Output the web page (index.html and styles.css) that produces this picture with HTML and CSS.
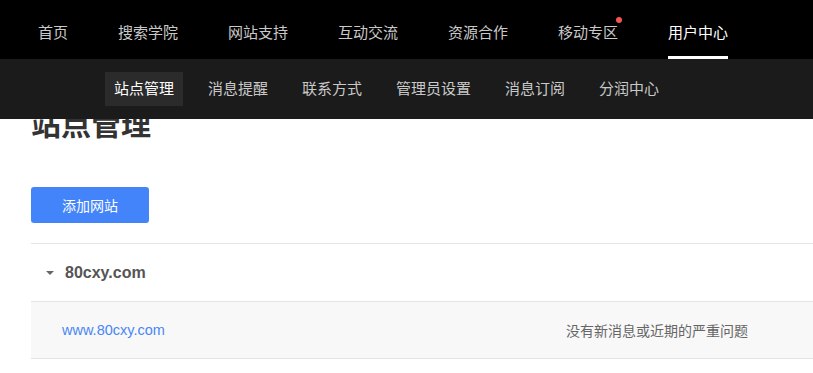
FILE: index.html
```html
<!DOCTYPE html>
<html lang="zh-CN">
<head>
  <meta charset="UTF-8">
  <title>站点管理</title>
  <link rel="stylesheet" href="styles.css">
</head>
<body>
  <div class="header">
    <div class="top-nav">
      <a href="#">首页</a>
      <a href="#">搜索学院</a>
      <a href="#">网站支持</a>
      <a href="#">互动交流</a>
      <a href="#">资源合作</a>
      <a href="#" class="has-dot">移动专区<i class="dot"></i></a>
      <a href="#" class="active">用户中心</a>
    </div>
    <div class="sub-nav">
      <a href="#" class="active">站点管理</a>
      <a href="#">消息提醒</a>
      <a href="#">联系方式</a>
      <a href="#">管理员设置</a>
      <a href="#">消息订阅</a>
      <a href="#">分润中心</a>
    </div>
  </div>

  <div class="main">
    <h1 class="title">站点管理</h1>
    <button class="btn-add">添加网站</button>

    <div class="site-list">
      <div class="site-head">
        <span class="caret"></span>
        <span class="domain">80cxy.com</span>
      </div>
      <div class="site-row">
        <a href="#" class="host">www.80cxy.com</a>
        <span class="status">没有新消息或近期的严重问题</span>
      </div>
    </div>
  </div>
</body>
</html>
```

FILE: styles.css
```css
body {
  margin: 0;
  font-family: "Liberation Sans", "Noto Sans CJK SC", sans-serif;
  background: #fff;
  overflow-x: hidden;
}
a {
  text-decoration: none;
}
.header {
  position: fixed;
  top: 0;
  left: 0;
  right: 0;
  z-index: 10;
}
.top-nav {
  display: flex;
  gap: 50px;
  height: 59px;
  padding-left: 38px;
  background: #000;
}
.top-nav a {
  position: relative;
  display: block;
  height: 59px;
  box-sizing: border-box;
  padding-top: 22px;
  line-height: 22px;
  font-size: 15px;
  color: #c9c9c9;
  border-bottom: 3px solid transparent;
}
.top-nav a.active {
  color: #fff;
  border-bottom-color: #fff;
}
.top-nav .dot {
  position: absolute;
  top: 17px;
  right: -4px;
  width: 6px;
  height: 6px;
  border-radius: 50%;
  background: #f45454;
}
.sub-nav {
  display: flex;
  align-items: center;
  gap: 16px;
  height: 60px;
  padding-left: 105px;
  background: #1b1b1b;
}
.sub-nav a {
  display: block;
  height: 34px;
  line-height: 34px;
  padding: 0 9px;
  font-size: 15px;
  color: #c9c9c9;
}
.sub-nav a.active {
  color: #fff;
  background: #2b2b2b;
}
.main {
  margin-left: 31px;
  padding-top: 105px;
}
.title {
  margin: 0;
  font-size: 30px;
  line-height: 40px;
  font-weight: bold;
  color: #333;
}
.btn-add {
  display: block;
  margin-top: 42px;
  width: 118px;
  height: 36px;
  border: 0;
  border-radius: 3px;
  background: #4384fa;
  color: #fff;
  font-family: inherit;
  font-size: 14px;
}
.site-list {
  margin-top: 20px;
  border-top: 1px solid #e4e4e4;
}
.site-head {
  display: flex;
  align-items: center;
  height: 57px;
  padding-left: 15px;
  border-bottom: 1px solid #e4e4e4;
}
.caret {
  width: 0;
  height: 0;
  border-left: 4px solid transparent;
  border-right: 4px solid transparent;
  border-top: 4px solid #666;
  margin-right: 11px;
}
.domain {
  font-size: 16px;
  font-weight: bold;
  color: #555;
}
.site-row {
  display: grid;
  grid-template-columns: 504px 1fr;
  align-items: center;
  height: 56px;
  padding-left: 31px;
  background: #f8f8f8;
  border-bottom: 1px solid #e4e4e4;
  font-size: 14px;
}
.host {
  font-size: 14.5px;
  color: #4a87f5;
}
.status {
  color: #666;
}
```
